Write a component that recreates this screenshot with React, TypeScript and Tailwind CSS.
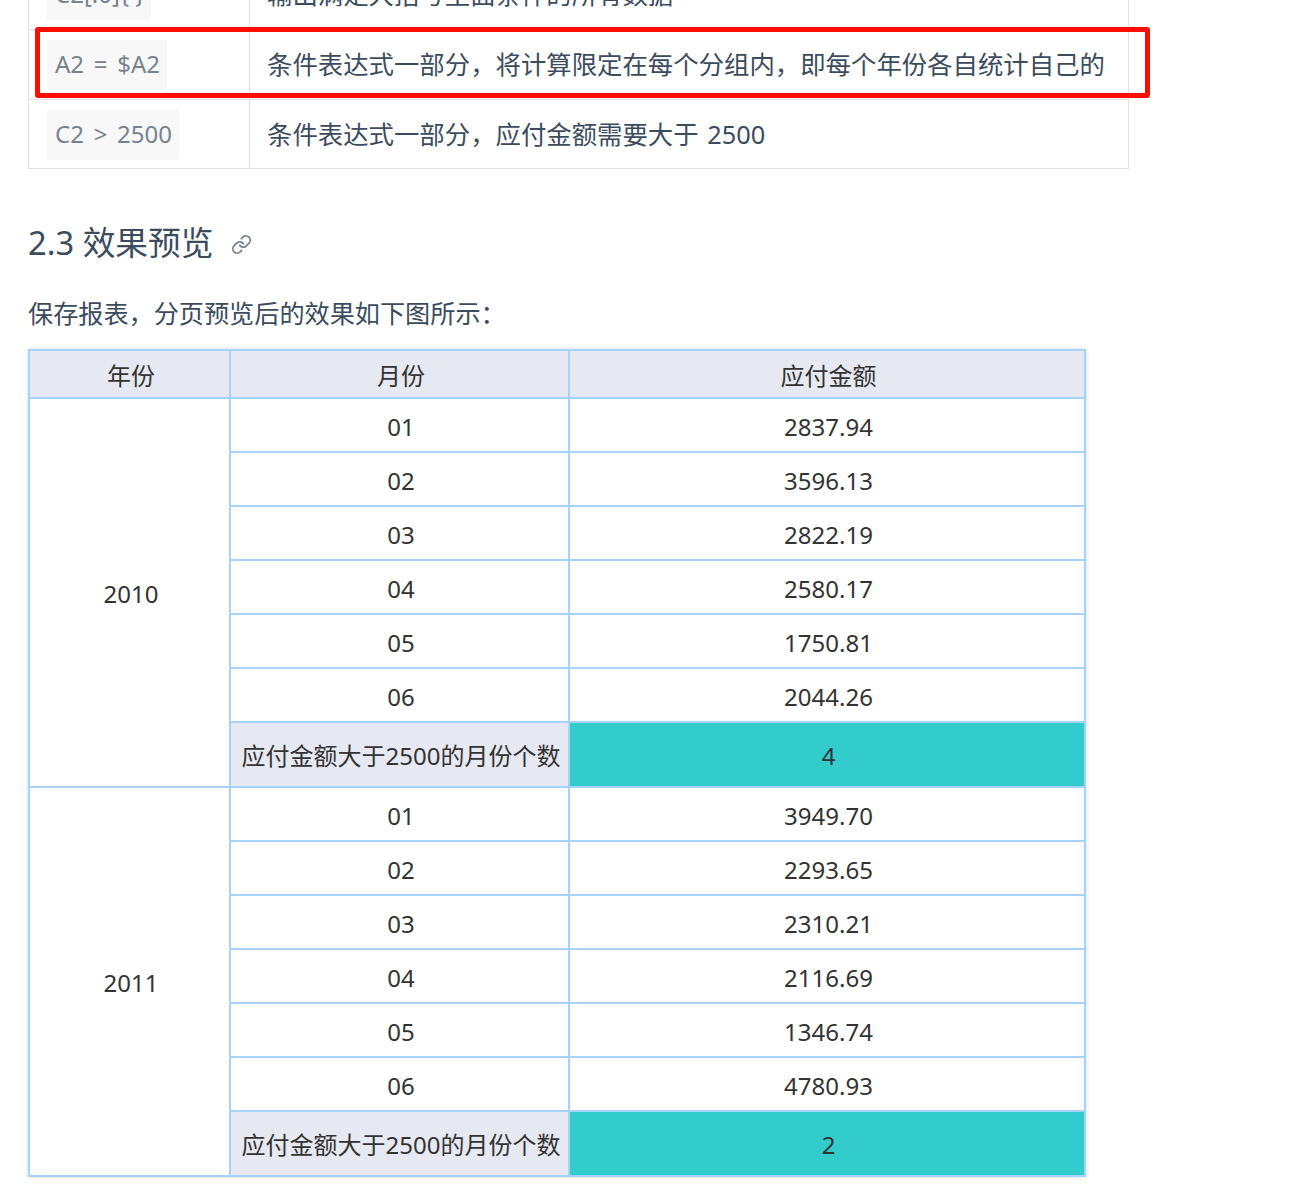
import React from 'react';
import { Link } from 'lucide-react';

const zh = '[font-family:"Noto_Sans","Noto_Sans_CJK_SC",sans-serif]';

const years = [
    { year: '2010', rows: [['01', '2837.94'], ['02', '3596.13'], ['03', '2822.19'], ['04', '2580.17'], ['05', '1750.81'], ['06', '2044.26']], count: '4' },
    { year: '2011', rows: [['01', '3949.70'], ['02', '2293.65'], ['03', '2310.21'], ['04', '2116.69'], ['05', '1346.74'], ['06', '4780.93']], count: '2' },
];

const cell = 'border-2 border-[#a6d2ff] pt-[3px] pb-0 pr-0 pl-[3px] text-center align-middle';

function Code({ children }: { children: React.ReactNode }) {
    return <code className="inline-block rounded-[3px] bg-[#f8f8f8] pl-2 pr-[7px] pt-[8px] pb-[10px] text-[24px] leading-[32px] text-[#76838f] [word-spacing:3.5px] [font-family:'Noto_Sans',sans-serif]">{children}</code>;
}

export default function App() {
    return (
        <div className={`relative h-[1190px] overflow-hidden bg-white pl-[28px] text-[#3b4c5e] ${zh}`}>
            {/* doc table, first row is cut by the top of the page */}
            <table className="-mt-[41px] w-[1101px] table-fixed border-collapse text-[25.4px] [word-spacing:2px]">
                <colgroup>
                    <col className="w-[221px]" />
                    <col />
                </colgroup>
                <tbody>
                    <tr className="h-[70px]">
                        <td className="border border-[#dfe2e5] pl-[18px] align-middle"><Code><span className="[word-spacing:0]">C2[!0]{'{ }'}</span></Code></td>
                        <td className="border border-[#dfe2e5] pl-[17px] align-middle">输出满足大括号里面条件的所有数据</td>
                    </tr>
                    <tr className="h-[70px]">
                        <td className="border border-[#dfe2e5] pl-[18px] align-middle"><Code>A2 = $A2</Code></td>
                        <td className="border border-[#dfe2e5] pl-[17px] align-middle">条件表达式一部分，将计算限定在每个分组内，即每个年份各自统计自己的</td>
                    </tr>
                    <tr className="h-[69px]">
                        <td className="border border-[#dfe2e5] pl-[18px] pt-px align-middle"><Code>C2 &gt; 2500</Code></td>
                        <td className="border border-[#dfe2e5] pl-[17px] align-middle">条件表达式一部分，应付金额需要大于 2500</td>
                    </tr>
                </tbody>
            </table>

            {/* red annotation box */}
            <div className="absolute left-[35px] top-[27px] h-[71px] w-[1115px] rounded-[3px] border-[5px] border-[#ff0c00]" />

            <h3 className="mt-[50px] flex h-[48px] items-center text-[32.7px] leading-[48px]">
                2.3 效果预览
                <Link size={21} strokeWidth={2} className="ml-[18px] mt-[3px] text-[#71828f]" />
            </h3>

            <p className="mt-[27px] text-[25.15px] leading-[38px]">保存报表，分页预览后的效果如下图所示：</p>

            <table className="mt-[17px] w-[1058px] table-fixed border-collapse text-[24px] text-[#333] shadow-[0_0_4px_rgba(0,0,0,0.15)]">
                <colgroup>
                    <col className="w-[201px]" />
                    <col className="w-[339px]" />
                    <col />
                </colgroup>
                <tbody>
                    <tr className="h-[48px] bg-[#e6e9f1]">
                        <td className={cell}>年份</td>
                        <td className={cell}>月份</td>
                        <td className={cell}>应付金额</td>
                    </tr>
                    {years.map((y) => (
                        <React.Fragment key={y.year}>
                            {y.rows.map((r, i) => (
                                <tr key={r[0]} className="h-[54px]">
                                    {i === 0 && <td rowSpan={7} className={cell}>{y.year}</td>}
                                    <td className={cell}>{r[0]}</td>
                                    <td className={cell}>{r[1]}</td>
                                </tr>
                            ))}
                            <tr className="h-[65px]">
                                <td className={`${cell} whitespace-nowrap bg-[#e6e9f1]`}>应付金额大于2500的月份个数</td>
                                <td className={`${cell} bg-[#33cccc]`}>{y.count}</td>
                            </tr>
                        </React.Fragment>
                    ))}
                </tbody>
            </table>
        </div>
    );
}
